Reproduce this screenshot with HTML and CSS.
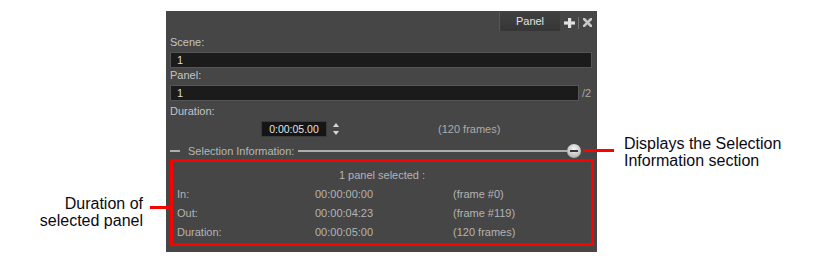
FILE: index.html
```html
<!DOCTYPE html>
<html lang="en">
<head>
  <meta charset="UTF-8">
  <meta name="viewport" content="width=device-width, initial-scale=1.0">
  <title>Panel view - Selection Information</title>
  <link rel="stylesheet" href="styles.css">
</head>
<body>
  <div class="page">

    <!-- Left callout -->
    <div class="note-left">
      <p class="note-text">Duration of<br>selected panel</p>
      <span class="callout-line left-line"></span>
    </div>

    <!-- Panel view -->
    <div class="panel">
      <div class="tabbar">
        <div class="tab">Panel</div>
        <svg class="tab-icon" width="11" height="10" viewBox="0 0 11 10">
          <rect x="4" y="0" width="3.2" height="10" fill="#e2e2e2"/>
          <rect x="0" y="3.4" width="11" height="3.2" fill="#e2e2e2"/>
        </svg>
        <span class="tab-sep"></span>
        <svg class="tab-icon" width="9" height="9" viewBox="0 0 9 9">
          <path d="M1 1 L8 8 M8 1 L1 8" stroke="#c8c8c8" stroke-width="2.6" stroke-linecap="square"/>
        </svg>
      </div>

      <div class="label first">Scene:</div>
      <div class="field">1</div>

      <div class="label">Panel:</div>
      <div class="field-row">
        <div class="field grow">1</div>
        <span class="suffix">/2</span>
      </div>

      <div class="label spaced">Duration:</div>
      <div class="duration-row">
        <div class="time-field">0:00:05.00</div>
        <svg class="spinner" width="6" height="14" viewBox="0 0 6 14">
          <path d="M0 5 L3 1 L6 5 Z" fill="#d8d8d8"/>
          <path d="M0 9 L3 13 L6 9 Z" fill="#d8d8d8"/>
        </svg>
        <span class="frames">(120 frames)</span>
      </div>

      <div class="section-head">
        <span class="rule short"></span>
        <span class="section-title">Selection Information:</span>
        <span class="rule long"></span>
        <span class="collapse"><span class="minus"></span></span>
      </div>

      <div class="info-box">
        <div class="info-title">1 panel selected :</div>
        <div class="info-grid">
          <span>In:</span><span>00:00:00:00</span><span>(frame #0)</span>
          <span>Out:</span><span>00:00:04:23</span><span>(frame #119)</span>
          <span>Duration:</span><span>00:00:05:00</span><span>(120 frames)</span>
        </div>
      </div>
    </div>

    <!-- Right callout -->
    <div class="note-right">
      <span class="callout-line right-line"></span>
      <p class="note-text">Displays the Selection<br>Information section</p>
    </div>

  </div>
</body>
</html>
```

FILE: styles.css
```css
body {
  margin: 0;
  background: #fff;
  font-family: "Liberation Sans", Arial, sans-serif;
}
.page {
  display: flex;
  align-items: flex-start;
  width: 816px;
  height: 264px;
  overflow: hidden;
}

/* callouts */
.note-text {
  margin: 0;
  font-size: 16px;
  line-height: 17px;
  color: #0a0a14;
  white-space: nowrap;
}
.callout-line {
  display: block;
  flex-shrink: 0;
  height: 3px;
  background: #ff0000;
  position: relative;
  z-index: 1;
}
.note-left {
  width: 166px;
  flex-shrink: 0;
  display: flex;
  justify-content: flex-end;
  align-items: flex-start;
  padding-top: 195px;
  text-align: right;
}
.left-line {
  width: 20px;
  margin-top: 11px;
  margin-left: 7px;
  margin-right: -4px;
}
.note-right {
  display: flex;
  align-items: flex-start;
  margin-top: 135px;
}
.right-line {
  width: 31px;
  margin-top: 14px;
  margin-left: -14px;
  margin-right: 10px;
}

/* panel */
.panel {
  width: 431px;
  height: 241px;
  flex-shrink: 0;
  margin-top: 11px;
  padding: 0 5px 0 4px;
  box-sizing: border-box;
  background: #464646;
  font-size: 11px;
  color: #c4c4c4;
}
.tabbar {
  display: flex;
  justify-content: flex-end;
  align-items: center;
  height: 21px;
}
.tab {
  width: 61px;
  height: 19px;
  margin-right: 4px;
  box-sizing: border-box;
  border-left: 1px solid #565656;
  background: linear-gradient(#404040, #363636);
  color: #e0e0e0;
  text-align: center;
  line-height: 19px;
}
.tab-icon {
  display: block;
  margin-top: 2px;
}
.tab-sep {
  width: 1px;
  height: 12px;
  margin: 2px 4px 0 3px;
  background: #707070;
}

.label {
  line-height: 15px;
}
.label.first {
  margin-top: 3px;
}
.label.spaced {
  margin-top: 3px;
}
.field {
  height: 16px;
  margin-top: 2px;
  box-sizing: border-box;
  border: 1px solid #555;
  background: #1b1b1b;
  padding-left: 6px;
  line-height: 14px;
  color: #dcdcdc;
}
.field-row {
  display: flex;
  align-items: flex-end;
}
.field.grow {
  width: 409px;
}
.suffix {
  margin-left: 3px;
  line-height: 15px;
  color: #a8a8a8;
}

.duration-row {
  display: flex;
  align-items: center;
  height: 16px;
  margin-top: 2px;
}
.time-field {
  width: 66px;
  height: 16px;
  margin-left: 91px;
  box-sizing: border-box;
  border: 1px solid #3a3a3a;
  background: #151515;
  font-size: 10.5px;
  line-height: 14px;
  text-align: center;
  color: #e4e4e4;
}
.spinner {
  display: block;
  margin-left: 6px;
}
.frames {
  margin-left: 99px;
  color: #acacac;
}

.section-head {
  display: flex;
  align-items: center;
  height: 14px;
  margin-top: 7px;
  margin-right: 11px;
}
.rule {
  height: 2px;
  background: #adadad;
}
.rule.short {
  width: 10px;
}
.rule.long {
  flex: 1;
}
.section-title {
  margin: 0 4px 0 8px;
  color: #b6b6b6;
}
.collapse {
  width: 14px;
  height: 14px;
  border-radius: 50%;
  background: radial-gradient(circle at 50% 35%, #f4f4f4, #c4c4c4 60%, #8a8a8a);
  display: flex;
  align-items: center;
  justify-content: center;
}
.minus {
  width: 8px;
  height: 2px;
  background: #3a3a3a;
}

.info-box {
  width: 424px;
  height: 87px;
  margin-top: 1px;
  box-sizing: border-box;
  border: 3px solid #ff0000;
  padding-top: 4px;
  line-height: 19px;
  color: #b4b4b4;
}
.info-title {
  text-align: center;
}
.info-grid {
  display: grid;
  grid-template-columns: 138px 138px 1fr;
  padding-left: 4px;
}
```
